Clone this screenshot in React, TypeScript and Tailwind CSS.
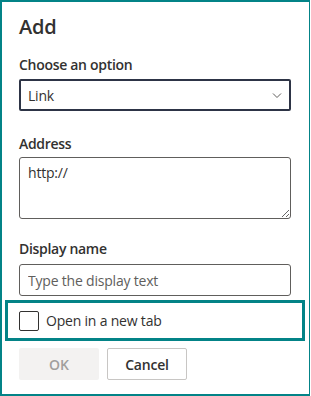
import React from "react";

const font = { fontFamily: '"Segoe UI", "Open Sans", "Noto Sans", sans-serif' };

export default function App() {
  return (
    <div
      style={font}
      className="w-[310px] h-[396px] bg-white border-l-2 border-t-2 border-r border-b-2 border-[#038387] pl-[17px] pr-[18px] pt-[11px] text-[#323130]"
    >
      <h1 className="text-[20px] leading-[28px] font-semibold tracking-[-0.2px]">Add</h1>

      <label className="block mt-[14px] text-[14px] leading-5 font-semibold tracking-[-0.3px]">
        Choose an option
      </label>
      <div className="mt-[4px] h-8 border-2 border-[#2d3446] rounded-[2px] flex items-center justify-between pl-[7px] pr-[7px]">
        <span className="text-[14px] tracking-[-0.2px]">Link</span>
        <svg width="10" height="10" viewBox="0 0 10 10" fill="none">
          <path d="M1 3.5L5 7.5L9 3.5" stroke="#605e5c" strokeWidth="1" />
        </svg>
      </div>

      <label className="block mt-[23px] text-[14px] leading-5 font-semibold tracking-[-0.3px]">
        Address
      </label>
      <textarea
        defaultValue="http://"
        className="mt-[3px] block w-full h-[62px] border border-[#605e5c] rounded-[3px] pl-[8px] pt-[5px] text-[14px] leading-5 text-[#323130] tracking-[-0.2px] outline-none resize-y"
      />

      <label className="block mt-[20px] text-[14px] leading-5 font-semibold tracking-[-0.3px]">
        Display name
      </label>
      <input
        placeholder="Type the display text"
        className="mt-[5px] block w-full h-8 border border-[#605e5c] rounded-[3px] px-[8px] text-[14px] tracking-[-0.2px] placeholder:text-[#605e5c] outline-none"
      />

      <div className="mt-[4px] -mx-[14px] h-[41px] border-[3px] border-[#038387] flex items-center pl-[11px]">
        <span className="w-5 h-5 border border-[#323130] rounded-[2px]" />
        <span className="ml-[7px] text-[14px] tracking-[-0.2px]">Open in a new tab</span>
      </div>

      <div className="mt-[7px] flex gap-2">
        <button className="w-20 h-8 rounded-[2px] bg-[#f3f2f1] text-[#a19f9d] text-[14px] font-semibold">
          OK
        </button>
        <button className="w-20 h-8 rounded-[2px] border border-[#c8c6c4] bg-white text-[#323130] text-[14px] font-semibold tracking-[-0.2px]">
          Cancel
        </button>
      </div>
    </div>
  );
}
